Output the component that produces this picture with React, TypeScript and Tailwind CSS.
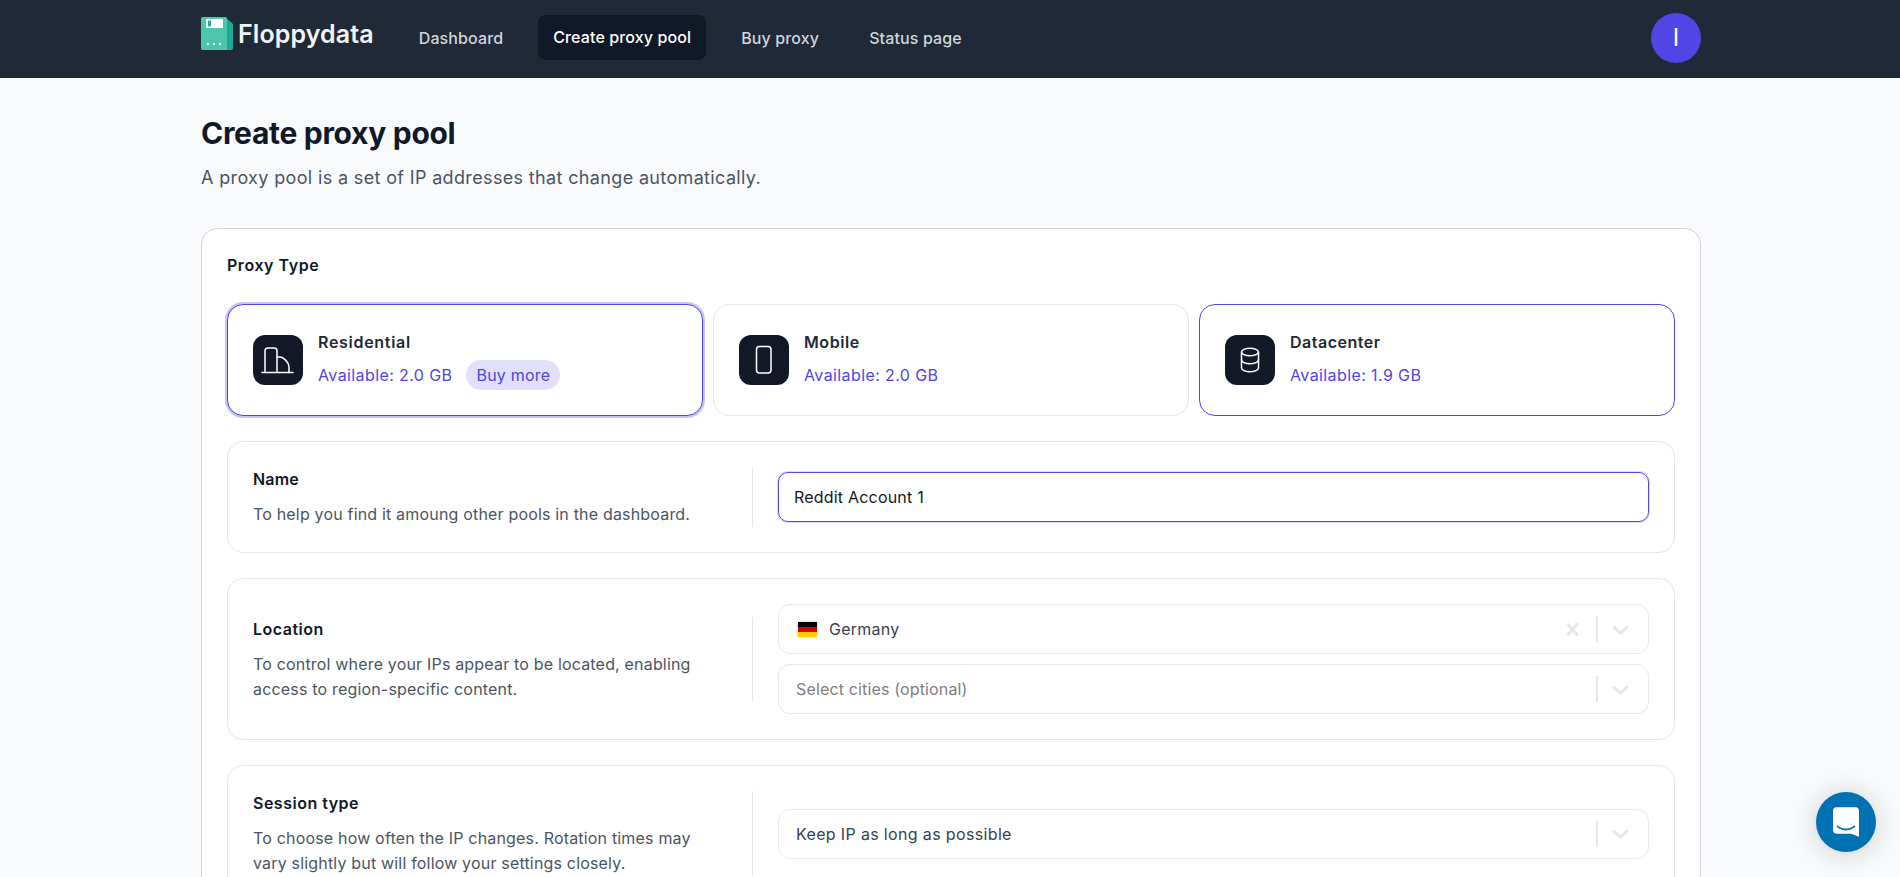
import React from "react";

function Logo() {
  return (
    <svg width="32" height="33" viewBox="0 0 32 33" className="shrink-0">
      <path d="M2 0H24L32 7V31a2 2 0 0 1-2 2H2a2 2 0 0 1-2-2V2a2 2 0 0 1 2-2Z" fill="#20a893" />
      <path d="M2 0H24a2 2 0 0 1 2 2V33H2a2 2 0 0 1-2-2V2a2 2 0 0 1 2-2Z" fill="#4cc7ad" />
      <rect x="5" y="2" width="17" height="9" rx="0.5" fill="#ffffff" />
      <rect x="7" y="3.5" width="3" height="6" fill="#35a592" />
      <circle cx="7" cy="27" r="1.1" fill="#ffffff" />
      <circle cx="13" cy="27" r="1.1" fill="#ffffff" />
      <circle cx="19" cy="27" r="1.1" fill="#ffffff" />
    </svg>
  );
}

function IconBox({ children }: { children: React.ReactNode }) {
  return (
    <div className="w-[50px] h-[50px] rounded-xl bg-[#111827] shrink-0">
      <svg width="50" height="50" viewBox="0 0 50 50" fill="none" stroke="#ffffff" strokeWidth="1.5" strokeLinecap="round" strokeLinejoin="round">
        {children}
      </svg>
    </div>
  );
}

function ProxyCard({
  title,
  titleClass,
  avail,
  icon,
  cardClass,
  buy,
}: {
  title: string;
  titleClass: string;
  avail: string;
  icon: React.ReactNode;
  cardClass: string;
  buy?: boolean;
}) {
  return (
    <div className={`flex items-center gap-[15px] h-[112px] px-[25px] rounded-2xl bg-white border ${cardClass}`}>
      <IconBox>{icon}</IconBox>
      <div className="flex flex-col gap-[6px]">
        <div className={`text-base leading-6 font-semibold text-[#1f2937] ${titleClass}`}>{title}</div>
        <div className="flex items-center h-[30px] gap-[14px]">
          <span className="-mt-[1px] text-base tracking-[0.4px] text-[#4f46e5]">{avail}</span>
          {buy && <span className="flex items-center h-[30px] px-[10px] rounded-full bg-[#e0e0fb] text-base tracking-[0.2px] text-[#4f46e5]">Buy more</span>}
        </div>
      </div>
    </div>
  );
}

function Section({
  title,
  titleClass,
  desc,
  children,
}: {
  title: string;
  titleClass: string;
  desc: React.ReactNode;
  children: React.ReactNode;
}) {
  return (
    <section className="flex items-center p-[25px] rounded-2xl border border-[#e5e7eb] bg-white">
      <div className="w-[500px] shrink-0 pr-[30px] border-r border-[#e5e7eb]">
        <div className={`text-base leading-6 font-semibold text-[#111827] ${titleClass}`}>{title}</div>
        <div className="mt-[11px] text-base leading-[25px] tracking-[0.18px] text-[#4b5563]">{desc}</div>
      </div>
      <div className="flex-1 pl-[25px] flex flex-col gap-[10px]">{children}</div>
    </section>
  );
}

function Chevron() {
  return (
    <svg width="27" height="27" viewBox="0 0 20 20" fill="#e8e8e8" className="shrink-0">
      <path d="M4.516 7.548c0.436-0.446 1.043-0.481 1.576 0l3.908 3.747 3.908-3.747c0.533-0.481 1.141-0.446 1.574 0 0.436 0.445 0.408 1.197 0 1.615-0.406 0.418-4.695 4.502-4.695 4.502-0.217 0.223-0.502 0.335-0.787 0.335s-0.57-0.112-0.789-0.335c0 0-4.287-4.084-4.695-4.502s-0.436-1.17 0-1.615z" />
    </svg>
  );
}

function Cross() {
  return (
    <svg width="25" height="25" viewBox="0 0 20 20" fill="#e8e8e8" className="shrink-0">
      <path d="M14.348 14.849c-0.469 0.469-1.229 0.469-1.697 0l-2.651-3.030-2.651 3.029c-0.469 0.469-1.229 0.469-1.697 0-0.469-0.469-0.469-1.229 0-1.697l2.758-3.15-2.759-3.152c-0.469-0.469-0.469-1.228 0-1.697s1.228-0.469 1.697 0l2.652 3.031 2.651-3.031c0.469-0.469 1.228-0.469 1.697 0s0.469 1.229 0 1.697l-2.758 3.152 2.758 3.15c0.469 0.469 0.469 1.229 0 1.698z" />
    </svg>
  );
}

function Select({ children, clear }: { children: React.ReactNode; clear?: boolean }) {
  return (
    <div className="flex items-center h-[50px] rounded-xl border border-[#e9e9e9] bg-white pl-[17px] pr-[14px]">
      <div className="flex-1 flex items-center text-base">{children}</div>
      {clear && (
        <div className="mr-[11px]">
          <Cross />
        </div>
      )}
      <div className="w-[2px] h-[26px] bg-[#e8e8e8] mr-[9px]" />
      <Chevron />
    </div>
  );
}

function Flag() {
  return (
    <div className="flex flex-col w-[19px] h-[15px] shadow-[0_0_3px_rgba(0,0,0,0.2)] mr-[12px] ml-[2px]">
      <div className="flex-1 bg-[#000000]" />
      <div className="flex-1 bg-[#dd0000]" />
      <div className="flex-1 bg-[#ffce00]" />
    </div>
  );
}

export default function App() {
  return (
    <div className="relative h-screen overflow-hidden bg-[#f9fafb] font-['Inter',sans-serif]">
      <header className="h-[78px] bg-[#1f2937]">
        <div className="ml-[201px] w-[1500px] h-full flex items-center">
          <div className="flex items-center gap-[5px] -mt-[11px] mr-[30px]">
            <Logo />
            <span className="mt-[1px] text-[25px] tracking-[0.1px] font-semibold text-[#f3f4f6] leading-8">Floppydata</span>
          </div>
          <nav className="flex items-center gap-[20px] -mt-[3px] text-base tracking-[0.12px] font-medium text-[#d1d5db]">
            <a className="px-[15px] py-[10px]">Dashboard</a>
            <a className="px-[15px] py-[10px] h-[45px] rounded-lg bg-[#111827] text-white">Create proxy pool</a>
            <a className="px-[15px] py-[10px]">Buy proxy</a>
            <a className="px-[15px] py-[10px]">Status page</a>
          </nav>
          <div className="ml-auto w-[50px] h-[50px] -mt-[2px] rounded-full bg-[#4f46e5] flex items-center justify-center text-white text-2xl">I</div>
        </div>
      </header>

      <main className="ml-[201px] w-[1500px]">
        <h1 className="pt-[37px] text-3xl leading-9 tracking-[-0.3px] font-bold text-[#111827]">Create proxy pool</h1>
        <p className="mt-[13px] text-lg leading-7 tracking-[0.35px] text-[#4b5563]">A proxy pool is a set of IP addresses that change automatically.</p>

        <div className="mt-[36px] rounded-2xl border border-[#d1d5db] bg-white px-[25px] pt-[24px] pb-[25px]">
          <div className="text-base leading-6 tracking-[0.55px] font-semibold text-[#111827]">Proxy Type</div>
          <div className="mt-[27px] grid grid-cols-3 gap-[10px]">
            <ProxyCard
              title="Residential"
              titleClass="tracking-[0.7px]"
              avail="Available: 2.0 GB"
              buy
              cardClass="border-[#4f46e5] shadow-[0_0_0_2px_#c7c4f5]"
              icon={
                <>
                  <path d="M9 37.5H40" />
                  <path d="M12 37.5V16a3 3 0 0 1 3-3h6a3 3 0 0 1 3 3V37.5" />
                  <path d="M24 22h3c3 0 9 5 9 10v5.5" />
                </>
              }
            />
            <ProxyCard
              title="Mobile"
              titleClass="tracking-[0.6px]"
              avail="Available: 2.0 GB"
              cardClass="border-[#e5e7eb]"
              icon={<rect x="17.5" y="11.5" width="14.5" height="26.5" rx="3" />}
            />
            <ProxyCard
              title="Datacenter"
              titleClass="tracking-[0.5px]"
              avail="Available: 1.9 GB"
              cardClass="border-[#4f46e5]"
              icon={
                <>
                  <ellipse cx="25" cy="17" rx="8.5" ry="3.8" />
                  <path d="M16.5 17V33c0 2.1 3.8 3.8 8.5 3.8s8.5-1.7 8.5-3.8V17" />
                  <path d="M16.5 25c0 2.1 3.8 3.8 8.5 3.8s8.5-1.7 8.5-3.8" />
                </>
              }
            />
          </div>

          <div className="mt-[25px] flex flex-col gap-[25px]">
            <Section title="Name" titleClass="tracking-[0.2px]" desc="To help you find it amoung other pools in the dashboard.">
              <input
                readOnly
                value="Reddit Account 1"
                className="w-full h-[50px] rounded-[10px] border border-[#4f46e5] shadow-[0_0_0_1px_#dcdaf8] px-[15px] text-base tracking-[0.2px] text-[#111827] outline-none"
              />
            </Section>
            <Section title="Location" titleClass="tracking-[0.5px]" desc="To control where your IPs appear to be located, enabling access to region-specific content.">
              <Select clear>
                <Flag />
                <span className="tracking-[0.25px] text-[#374151]">Germany</span>
              </Select>
              <Select>
                <span className="tracking-[0.15px] text-[#808080]">Select cities (optional)</span>
              </Select>
            </Section>
            <Section title="Session type" titleClass="tracking-[0.5px]" desc="To choose how often the IP changes. Rotation times may vary slightly but will follow your settings closely.">
              <Select>
                <span className="tracking-[0.35px] text-[#374151]">Keep IP as long as possible</span>
              </Select>
            </Section>
          </div>
        </div>
      </main>

      <div className="fixed left-[1816px] top-[792px] w-[60px] h-[60px] rounded-full bg-[#0071b2] shadow-[0_1px_6px_rgba(0,0,0,0.06),0_2px_32px_rgba(0,0,0,0.16)] flex items-center justify-center">
        <svg width="26" height="30" viewBox="0 0 28 32" fill="#ffffff">
          <path d="M28 32s-4.714-1.855-8.527-3.34H3.437C1.54 28.66 0 27.026 0 25.013V3.644C0 1.633 1.54 0 3.437 0h21.125c1.898 0 3.437 1.632 3.437 3.645v18.404H28V32zm-4.139-11.982a.88.88 0 00-1.292-.105c-.03.026-3.704 3.118-8.57 3.118-4.806 0-8.51-3.074-8.571-3.126a.88.88 0 00-1.29.107 1.01 1.01 0 00-.219.708.992.992 0 00.318.664c.174.15 4.286 3.66 9.762 3.66 5.477 0 9.59-3.51 9.763-3.66.373-.32.416-.91.099-1.306z" />
        </svg>
      </div>
    </div>
  );
}
